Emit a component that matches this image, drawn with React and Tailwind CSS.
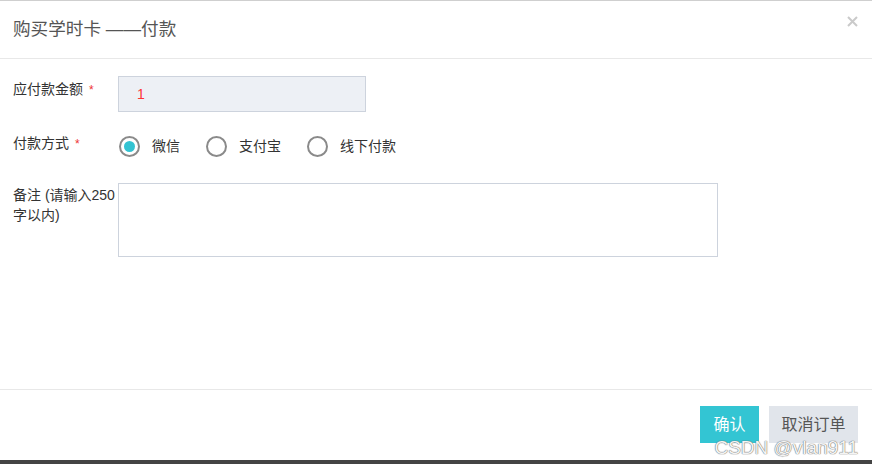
import React, { useState } from 'react';

const FONT = { fontFamily: '"Liberation Sans", "Noto Sans CJK SC", sans-serif' };

const Radio = ({ label, checked, onClick }) => (
  <label onClick={onClick} className="flex cursor-pointer items-center">
    <span className="flex h-[21px] w-[21px] items-center justify-center rounded-full border-2 border-[#8a8a8a] bg-white">
      {checked && <span className="h-[11px] w-[11px] rounded-full bg-[#33c3d2]" />}
    </span>
    <span className="ml-[12px] text-sm text-[#333]">{label}</span>
  </label>
);

const App = () => {
  const [method, setMethod] = useState('wechat');

  return (
    <div style={FONT} className="relative flex h-[464px] w-[872px] flex-col overflow-hidden border-t border-[#cfcfcf] bg-white">
      {/* header */}
      <div className="flex h-[58px] items-center justify-between border-b border-[#e8e8e8] pl-[13px] pr-[14px]">
        <h3 className="text-[17.6px] font-normal text-[#555]">购买学时卡 ——付款</h3>
        <svg width="11" height="11" viewBox="0 0 11 11" className="-mt-[16px]">
          <path d="M1 1 L10 10 M10 1 L1 10" stroke="#cacaca" strokeWidth="2" />
        </svg>
      </div>

      {/* body */}
      <div className="flex flex-1 flex-col px-[13px] pt-[17px]">
        <div className="flex">
          <div className="w-[105px] pt-[3px] text-sm leading-5 text-[#333]">
            应付款金额<span className="ml-[6px] text-xs text-[#e33]">*</span>
          </div>
          <div className="flex h-9 w-[248px] items-center border border-[#cdd3dd] bg-[#edf0f5] pl-[18px] text-sm text-[#f33]">
            1
          </div>
        </div>

        <div className="mt-[20px] flex">
          <div className="w-[105px] pt-[1px] text-sm leading-5 text-[#333]">
            付款方式<span className="ml-[6px] text-xs text-[#e33]">*</span>
          </div>
          <div className="flex h-7 items-center gap-[26px] pl-[1px]">
            <Radio label="微信" checked={method === 'wechat'} onClick={() => setMethod('wechat')} />
            <Radio label="支付宝" checked={method === 'alipay'} onClick={() => setMethod('alipay')} />
            <Radio label="线下付款" checked={method === 'offline'} onClick={() => setMethod('offline')} />
          </div>
        </div>

        <div className="mt-[23px] flex">
          <div className="w-[105px] pt-[2px] text-sm leading-5 text-[#333]">
            备注 (请输入250字以内)
          </div>
          <textarea className="h-[74px] w-[600px] resize-none border border-[#cdd3dd] bg-white outline-none" />
        </div>
      </div>

      {/* footer */}
      <div className="flex h-[71px] items-start justify-end gap-[10px] border-t border-[#e8e8e8] pr-[14px] pt-[16px]">
        <button className="h-[37px] w-[59px] bg-[#33c5d3] text-base text-white">确认</button>
        <button className="h-[37px] w-[89px] bg-[#e1e5eb] text-base text-[#555]">取消订单</button>
      </div>

      <div className="h-[4px] bg-[#444]" />

      <span
        className="absolute bottom-[7px] right-[14px] text-[19px] leading-none text-[#f4f4f4]"
        style={{ textShadow: '0 0 1px #666, 0 0 1px #666' }}
      >
        CSDN @vlan911
      </span>
    </div>
  );
};

export default App;
